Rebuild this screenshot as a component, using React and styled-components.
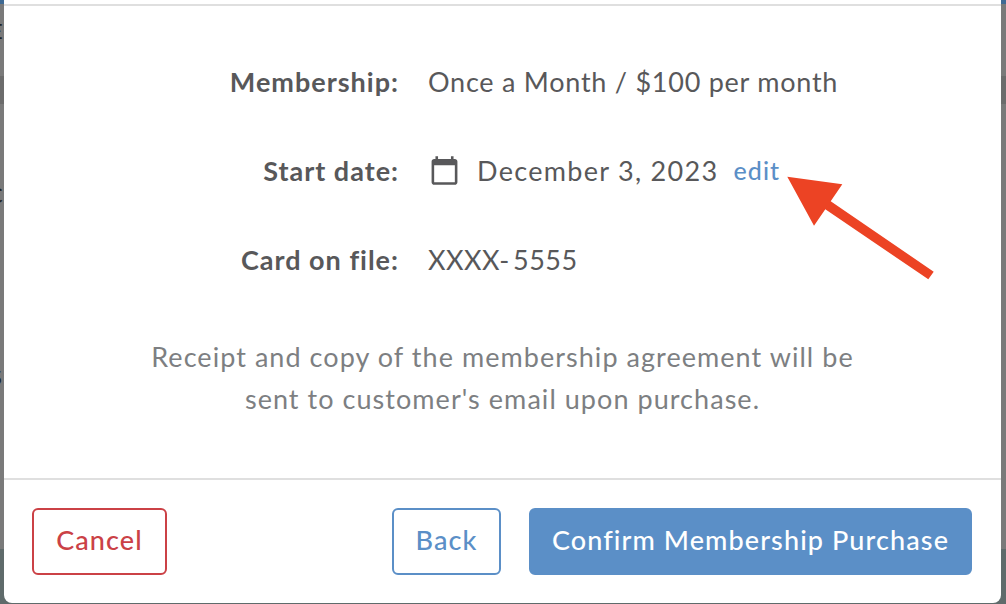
import React from 'react';
import styled, { createGlobalStyle } from 'styled-components';

const GlobalStyle = createGlobalStyle`
  html, body {
    margin: 0;
    padding: 0;
    background: #757a7a;
  }
`;

const Page = styled.div`
  position: relative;
  box-sizing: border-box;
  width: 1006px;
  height: 604px;
  overflow: hidden;
  padding: 0 5px 1px 4px;
  background: linear-gradient(
    #3f6a94 0 4px,
    #7a7a7a 4px 76px,
    #6c6c6c 76px 104px,
    #7a7a7a 104px 549px,
    #5f6b6b 549px 100%
  );
  font-family: Lato, "Liberation Sans", sans-serif;
`;

const BackdropGlyph = styled.span`
  position: absolute;
  left: ${(p) => p.$left}px;
  top: ${(p) => p.$top}px;
  font-size: 22px;
  line-height: 1;
  color: #1f2426;
`;

const Modal = styled.div`
  position: relative;
  height: 100%;
  display: flex;
  flex-direction: column;
  background: #fff;
  border-radius: 0 0 8px 8px;
`;

const TopBar = styled.div`
  height: 4px;
  border-bottom: 2px solid #dfdfdf;
`;

const Body = styled.div`
  flex: 1;
  display: flex;
  flex-direction: column;
  padding-top: 50px;
`;

const Details = styled.div`
  display: flex;
  flex-direction: column;
  gap: 39px;
`;

const Row = styled.div`
  display: grid;
  grid-template-columns: 395px 1fr;
  column-gap: 29px;
  align-items: center;
  height: 50px;
  font-size: 27px;
  color: #58585a;
`;

const Label = styled.div`
  text-align: right;
  font-weight: 700;
  letter-spacing: 1px;
`;

const Value = styled.div`
  display: flex;
  align-items: center;
  letter-spacing: ${(p) => p.$tracking || 0.75}px;
  word-spacing: ${(p) => p.$wordGap || 0}px;
`;

const CalendarIcon = styled.svg`
  width: 31px;
  height: 31px;
  margin-left: 1px;
  margin-right: 17px;
  fill: #58585a;
`;

const EditLink = styled.a`
  margin-left: 15px;
  font-size: 25px;
  font-weight: 500;
  letter-spacing: 1.1px;
  color: #5b8fc7;
`;

const Note = styled.p`
  margin: 52px 0 0;
  text-align: center;
  font-size: 27px;
  line-height: 42px;
  letter-spacing: 1.05px;
  color: #7d7f82;
`;

const Footer = styled.div`
  display: flex;
  align-items: center;
  height: 125px;
  box-sizing: border-box;
  padding: 0 29px 0 28px;
  border-top: 2px solid #dfdfdf;
`;

const Button = styled.button`
  box-sizing: border-box;
  height: 67px;
  width: ${(p) => p.$width}px;
  margin-right: ${(p) => p.$gap || 0}px;
  padding: 0 0 4px;
  border: 2px solid ${(p) => p.$color};
  border-radius: 6px;
  background: ${(p) => (p.$filled ? p.$color : '#fff')};
  color: ${(p) => (p.$filled ? '#fff' : p.$color)};
  font-family: inherit;
  font-size: 27px;
  font-weight: 500;
  letter-spacing: 1.1px;
`;

const Spacer = styled.div`
  flex: 1;
`;

const Arrow = styled.svg`
  position: absolute;
  left: 0;
  top: 0;
  width: 1006px;
  height: 604px;
  pointer-events: none;
`;

const App = () => {
  return (
    <Page>
      <GlobalStyle />
      <BackdropGlyph $left={-10} $top={20}>E</BackdropGlyph>
      <BackdropGlyph $left={-12} $top={184}>C</BackdropGlyph>
      <BackdropGlyph $left={-10} $top={366}>S</BackdropGlyph>
      <Modal>
        <TopBar />
        <Body>
          <Details>
            <Row>
              <Label>Membership:</Label>
              <Value>Once a Month / $100 per month</Value>
            </Row>
            <Row>
              <Label>Start date:</Label>
              <Value $tracking={1.3}>
                <CalendarIcon viewBox="0 0 24 24">
                  <path d="M20 3h-1V1h-2v2H7V1H5v2H4c-1.1 0-2 .9-2 2v16c0 1.1.9 2 2 2h16c1.1 0 2-.9 2-2V5c0-1.1-.9-2-2-2zm0 18H4V8h16v13z" />
                </CalendarIcon>
                December 3, 2023
                <EditLink>edit</EditLink>
              </Value>
            </Row>
            <Row>
              <Label>Card on file:</Label>
              <Value $tracking={0.45} $wordGap={-4}>XXXX- 5555</Value>
            </Row>
          </Details>
          <Note>
            Receipt and copy of the membership agreement will be
            <br />
            sent to customer's email upon purchase.
          </Note>
        </Body>
        <Footer>
          <Button $color="#cb4146" $width={135}>Cancel</Button>
          <Spacer />
          <Button $color="#5b8fc7" $width={109} $gap={28}>Back</Button>
          <Button $color="#5b8fc7" $width={443} $filled>Confirm Membership Purchase</Button>
        </Footer>
      </Modal>
      <Arrow viewBox="0 0 1006 604">
        <polygon
          points="787.3,176.7 842.3,184.3 830.7,201.3 933.7,271.7 928.3,279.3 825.3,209.3 814,225.7"
          fill="#ec4324"
        />
      </Arrow>
    </Page>
  );
};

export default App;
